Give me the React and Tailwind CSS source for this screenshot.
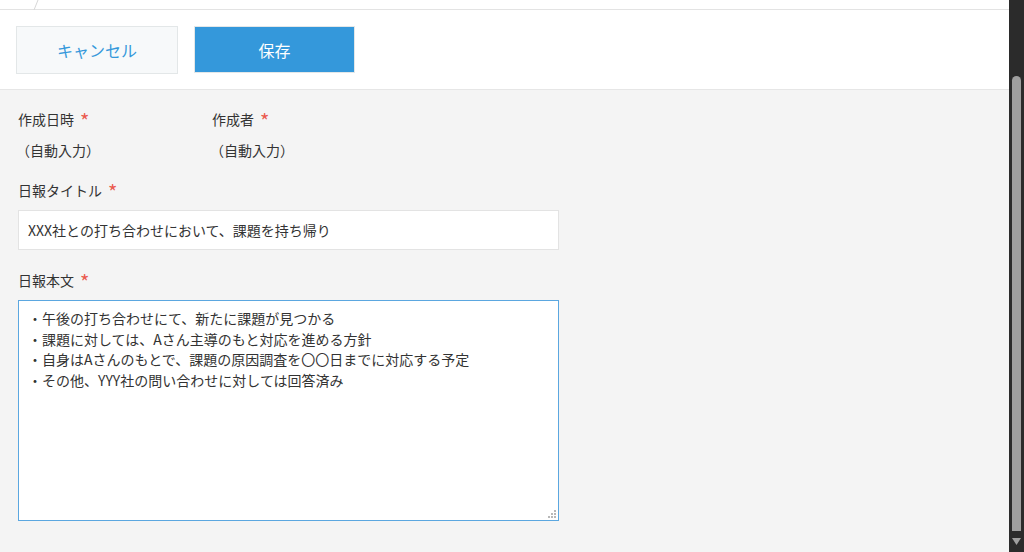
export default function App() {
  const font = { fontFamily: '"Noto Sans CJK JP", "Noto Sans", sans-serif' }
  const Req = () => <span className="ml-[6px] translate-y-[2px] text-[20px] leading-none text-[#ea5a4e]">*</span>

  return (
    <div className="flex h-[552px] w-[1024px] overflow-hidden text-[14px] text-[#333]" style={font}>
      <div className="flex flex-1 flex-col bg-[#f4f4f4]">
        {/* breadcrumb strip */}
        <div className="relative h-[10px] border-b border-[#e3e3e3] bg-white">
          <svg className="absolute left-[30px] top-0" width="12" height="10" viewBox="0 0 12 10">
            <line x1="8" y1="0" x2="4" y2="10" stroke="#d8d8d8" strokeWidth="1" />
          </svg>
        </div>

        {/* toolbar */}
        <div className="flex h-[80px] items-start gap-4 border-b border-[#e6e6e6] bg-white px-4 pt-4">
          <button className="h-[48px] w-[162px] border border-[#e3e7e8] bg-[#f7f9fa] text-[16px] text-[#3498db]">
            キャンセル
          </button>
          <button className="h-[47px] w-[161px] border border-[#e3e7e8] bg-[#3498db] text-[16px] text-white">
            保存
          </button>
        </div>

        {/* form */}
        <div className="px-[18px] pt-[19px]">
          <div className="flex">
            <div className="w-[194px]">
              <div className="flex h-[20px] items-center leading-[20px]">作成日時<Req /></div>
              <div className="mt-[11px] h-[20px] leading-[20px] -ml-[2px]">（自動入力）</div>
            </div>
            <div>
              <div className="flex h-[20px] items-center leading-[20px]">作成者<Req /></div>
              <div className="mt-[11px] h-[20px] leading-[20px] -ml-[2px]">（自動入力）</div>
            </div>
          </div>

          <div className="mt-[20px] flex h-[20px] items-center leading-[20px]">日報タイトル<Req /></div>
          <div className="mt-[10px] flex h-[40px] w-[541px] items-center border border-[#e3e3e3] bg-white px-[9px]">
            XXX社との打ち合わせにおいて、課題を持ち帰り
          </div>

          <div className="mt-[20px] flex h-[20px] items-center leading-[20px]">日報本文<Req /></div>
          <div className="relative mt-[10px] w-[541px]">
            <textarea
              className="block h-[221px] w-full resize-none border border-[#5ba7e0] bg-white px-[9px] pt-[7px] leading-[20.7px] text-[#333] outline-none"
              style={font}
              defaultValue={
                '・午後の打ち合わせにて、新たに課題が見つかる\n・課題に対しては、Aさん主導のもと対応を進める方針\n・自身はAさんのもとで、課題の原因調査を〇〇日までに対応する予定\n・その他、YYY社の問い合わせに対しては回答済み'
              }
            />
            <svg className="absolute bottom-[2px] right-[2px]" width="10" height="10" viewBox="0 0 10 10">
              <g fill="#b8b8b8">
                <rect x="7" y="1" width="2" height="2" />
                <rect x="4" y="4" width="2" height="2" />
                <rect x="7" y="4" width="2" height="2" />
                <rect x="1" y="7" width="2" height="2" />
                <rect x="4" y="7" width="2" height="2" />
                <rect x="7" y="7" width="2" height="2" />
              </g>
            </svg>
          </div>
        </div>
      </div>

      {/* scrollbar */}
      <div className="flex w-[15px] flex-col bg-[#2b2b2b] px-[3px] pt-[76px]">
        <div className="flex-1 rounded-t-full bg-[#9f9f9f]" />
        <div className="flex h-[21px] items-center justify-center">
          <svg width="9" height="7" viewBox="0 0 9 7">
            <path d="M0 0 H9 L4.5 7 Z" fill="#9f9f9f" />
          </svg>
        </div>
      </div>
    </div>
  )
}
